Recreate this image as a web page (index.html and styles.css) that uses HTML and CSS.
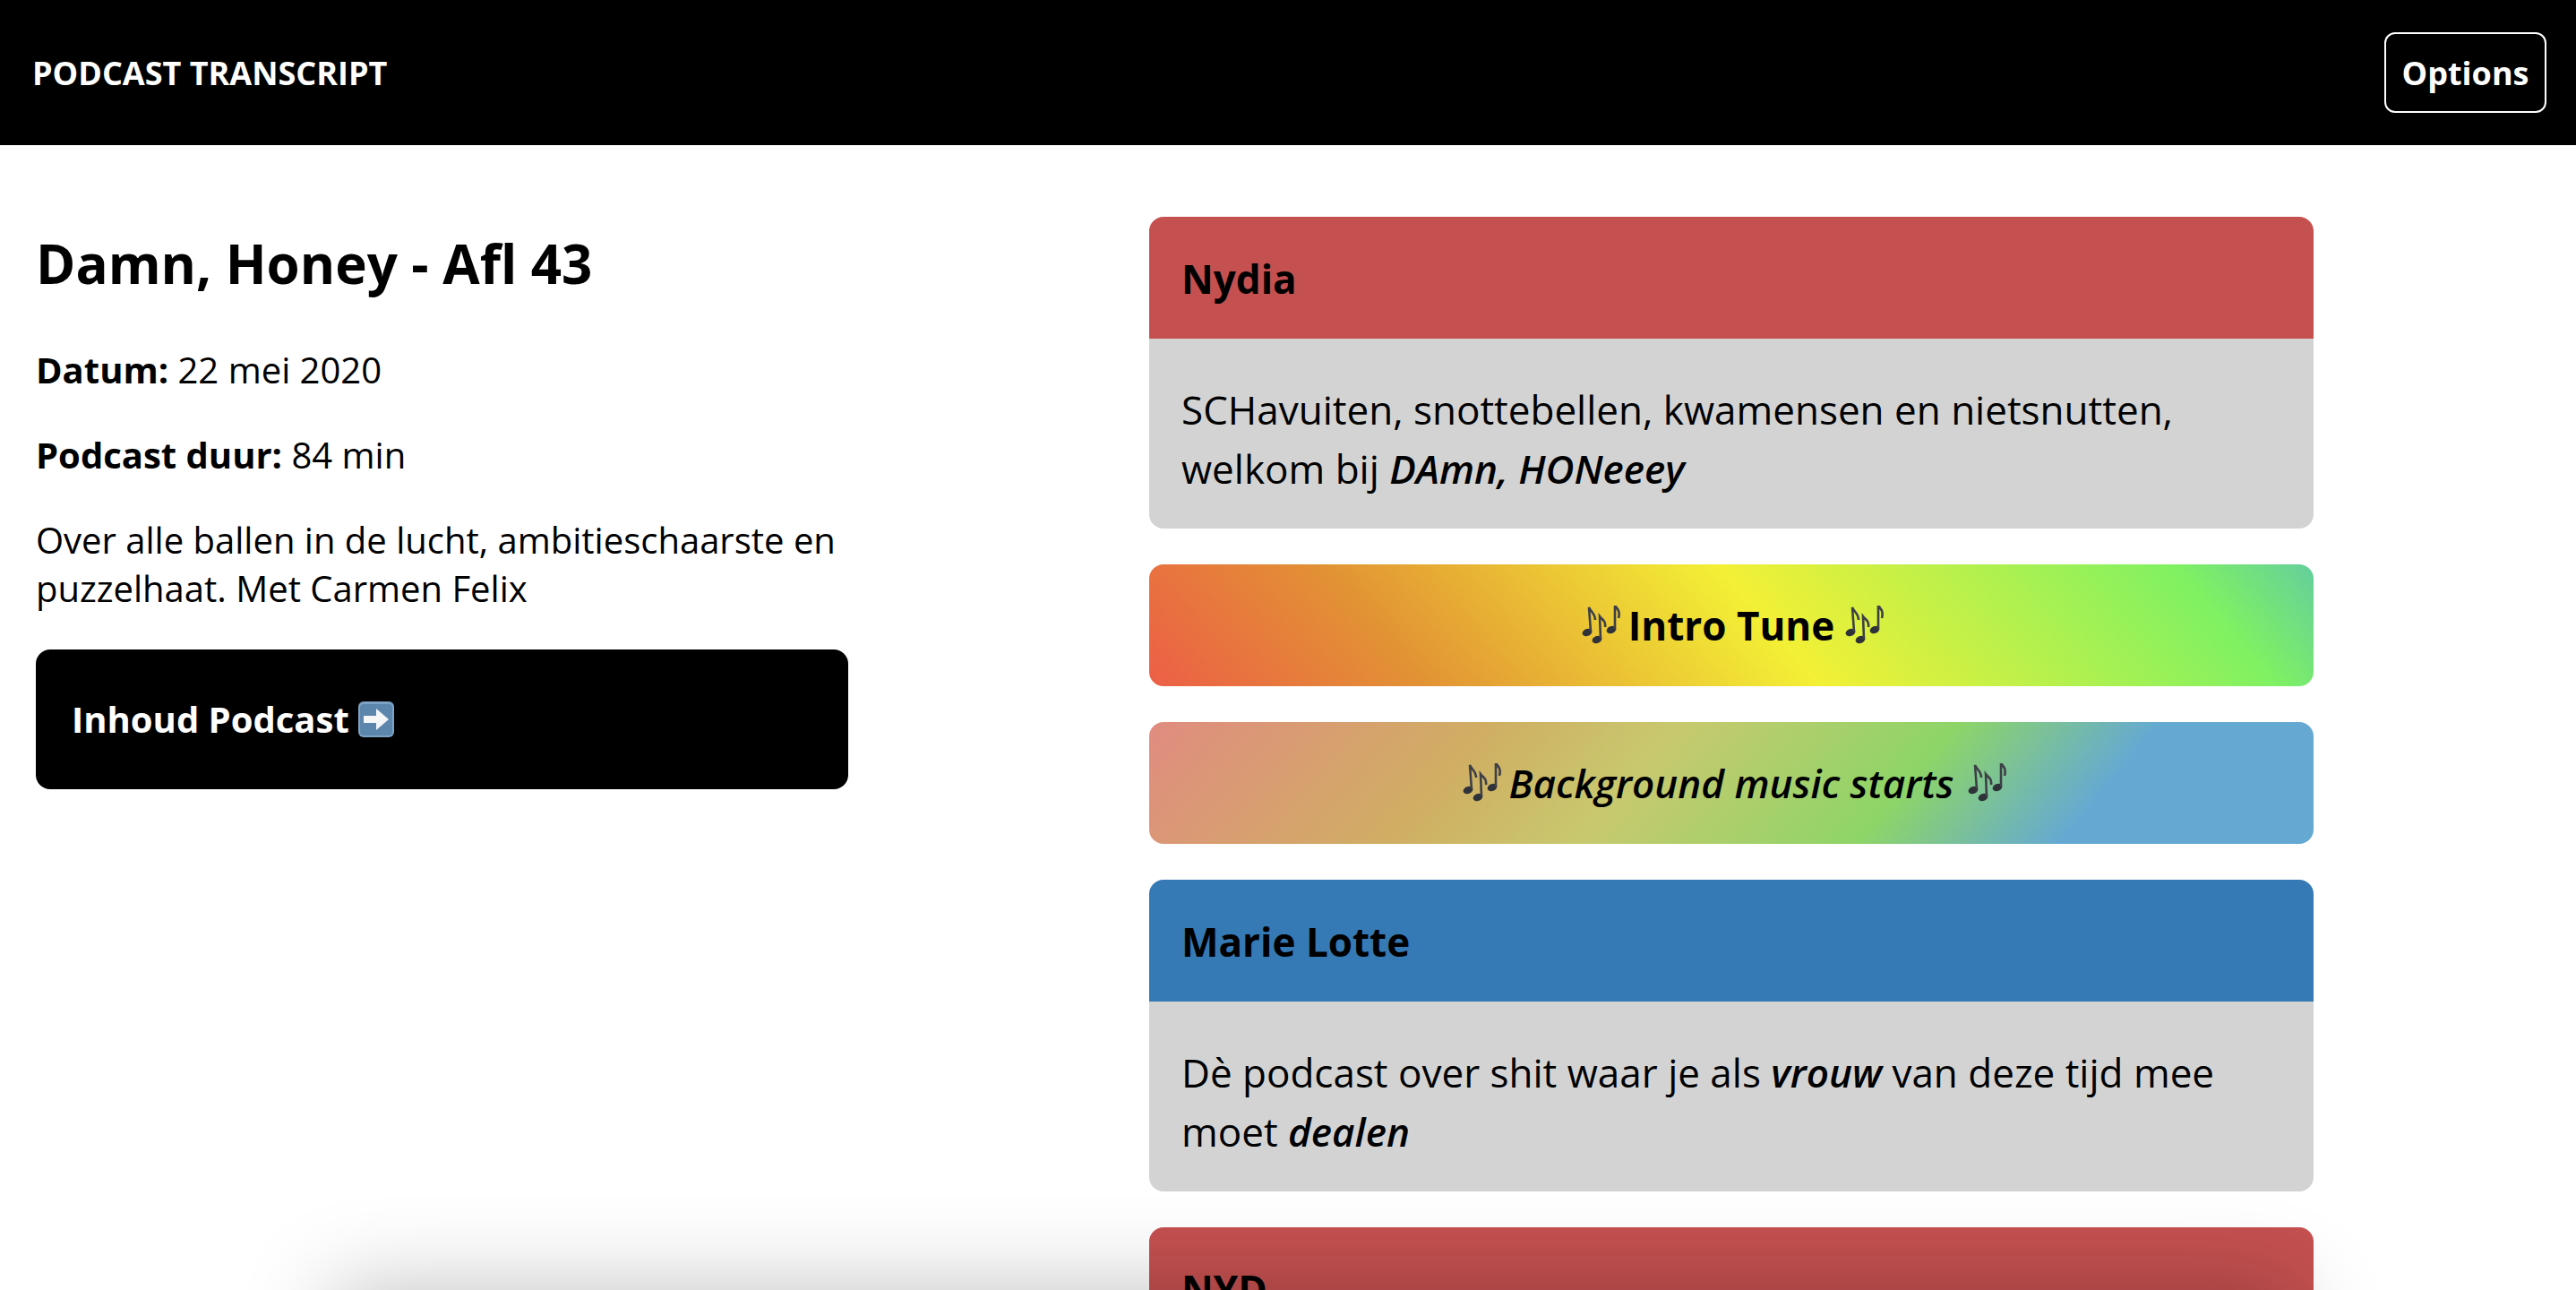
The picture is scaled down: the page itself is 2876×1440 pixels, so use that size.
FILE: index.html
```html
<!doctype html>
<html>
<head>
<title>Podcast Transcript</title>
<meta http-equiv="Content-Type" content="text/html; charset=utf-8" />
<link rel="stylesheet" href="styles.css">
</head>
<body>
    <header class="top-bar">
        <h1 class="top-title">PODCAST TRANSCRIPT</h1>
        <button class="options-btn">Options</button>
    </header>
    <main class="page">
        <section class="info">
            <h2 class="info-title">Damn, Honey - Afl 43</h2>
            <p><strong>Datum:</strong> 22 mei 2020</p>
            <p><strong>Podcast duur:</strong> 84 min</p>
            <p>Over alle ballen in de lucht, ambitieschaarste en puzzelhaat. Met Carmen Felix</p>
            <a class="toc-btn">Inhoud Podcast
                <svg class="arrow-icon" viewBox="0 0 40 40">
                    <rect x="0" y="0" width="40" height="40" rx="6" fill="#7ea2c4"/>
                    <rect x="2" y="3" width="36" height="35" rx="4" fill="#5d86ad"/>
                    <path d="M6 16h14V8l14 12-14 12v-8H6z" fill="#f4f6f8"/>
                </svg>
            </a>
        </section>
        <section class="transcript">
            <article class="card">
                <h3 class="card-head red">Nydia</h3>
                <p class="card-body">SCHavuiten, snottebellen, kwamensen en nietsnutten, welkom bij <em>DAmn, HONeeey</em></p>
            </article>
            <div class="jingle intro">
                <svg class="notes" viewBox="0 0 44 44"><use href="#notes"/></svg>
                <strong>Intro Tune</strong>
                <svg class="notes" viewBox="0 0 44 44"><use href="#notes"/></svg>
            </div>
            <div class="jingle music">
                <svg class="notes" viewBox="0 0 44 44"><use href="#notes"/></svg>
                <em>Background music starts</em>
                <svg class="notes" viewBox="0 0 44 44"><use href="#notes"/></svg>
            </div>
            <article class="card">
                <h3 class="card-head blue">Marie Lotte</h3>
                <p class="card-body">Dè podcast over shit waar je als <em>vrouw</em> van deze tijd mee moet <em>dealen</em></p>
            </article>
            <article class="card">
                <h3 class="card-head red">NYD</h3>
            </article>
        </section>
    </main>
    <div class="edge-shadow"></div>
    <svg class="defs" width="0" height="0">
        <symbol id="notes" viewBox="0 0 44 44">
            <g fill="#2f3239">
                <ellipse cx="6" cy="30" rx="5.5" ry="4" transform="rotate(-20 6 30)"/>
                <ellipse cx="17" cy="38" rx="5.5" ry="4" transform="rotate(-20 17 38)"/>
                <ellipse cx="33" cy="27" rx="5.5" ry="4" transform="rotate(-20 33 27)"/>
            </g>
            <g fill="none" stroke="#3d4047" stroke-width="2.6">
                <path d="M10 29 8 2c2 5 7 7 7 14"/>
                <path d="M21 37 20 12c3 4 7 5 6 12"/>
                <path d="M37 26 37 0c3 4 6 6 4 14"/>
            </g>
        </symbol>
    </svg>
</body>
</html>
```

FILE: styles.css
```css
*{
    margin: 0;
    padding: 0;
    box-sizing: border-box;
}
html, body{
    height: 100%;
    overflow: hidden;
}
body{
    font-family: "Open Sans", "Noto Sans", sans-serif;
    font-size: 40px;
    line-height: 54px;
    color: #000;
    background: #fff;
}
em{
    font-style: italic;
    font-weight: 600;
}
.top-bar{
    height: 162px;
    background: #000;
    display: flex;
    align-items: center;
    justify-content: space-between;
    padding: 0 33px 0 36px;
}
.top-title{
    font-size: 36px;
    line-height: 54px;
    padding-top: 2px;
    font-weight: 700;
    color: #fff;
}
.options-btn{
    width: 181px;
    height: 90px;
    font: 700 36px "Open Sans", sans-serif;
    color: #fff;
    background: #000;
    border: 2px solid #fff;
    border-radius: 12px;
}
.page{
    display: grid;
    grid-template-columns: 907px 1300px;
    column-gap: 336px;
    padding: 80px 0 0 40px;
}
.info{
    padding-top: 11px;
}
.info p{
    margin-bottom: 41px;
}
.info-title{
    font-size: 60px;
    line-height: 82px;
    font-weight: 700;
    margin-bottom: 51px;
}
.toc-btn{
    display: flex;
    align-items: center;
    gap: 10px;
    height: 156px;
    padding: 0 40px;
    background: #000;
    color: #fff;
    font-weight: 700;
    border-radius: 16px;
}
.arrow-icon{
    width: 40px;
    height: 40px;
}
.transcript{
    display: flex;
    flex-direction: column;
    gap: 40px;
}
.card{
    border-radius: 16px;
    overflow: hidden;
}
.card-head{
    height: 136px;
    display: flex;
    align-items: center;
    padding: 2px 36px 0;
    font-size: 44px;
    font-weight: 700;
}
.red{
    background: #c55050;
}
.blue{
    background: #3579b5;
}
.card-body{
    background: #d3d3d3;
    padding: 46px 36px 34px;
    font-size: 44px;
    line-height: 66px;
}
.jingle{
    height: 136px;
    border-radius: 16px;
    display: flex;
    align-items: center;
    justify-content: center;
    gap: 12px;
    padding-left: 4px;
    font-size: 44px;
}
.intro{
    background: linear-gradient(50deg, #ec5f46 0%, #e29334 22%, #f3f035 53%, #7ff162 89%, #64cf9c 100%);
}
.music{
    padding-left: 8px;
    background: linear-gradient(130deg, #e08c80 0%, #d0ae63 27%, #c8c96f 42%, #8dd568 64%, #65a9d3 80%, #65a9d3 100%);
}
.notes{
    width: 44px;
    height: 44px;
}
.notes:first-child{
    margin-right: -4px;
}
.music .notes:last-child{
    margin-left: 4px;
}
.defs{
    position: absolute;
}
/* schaduw van het venster eronder */
.edge-shadow{
    position: absolute;
    left: 370px;
    width: 2190px;
    top: 1440px;
    height: 200px;
    box-shadow: 0 0 100px rgba(0,0,0,0.25);
}
```
